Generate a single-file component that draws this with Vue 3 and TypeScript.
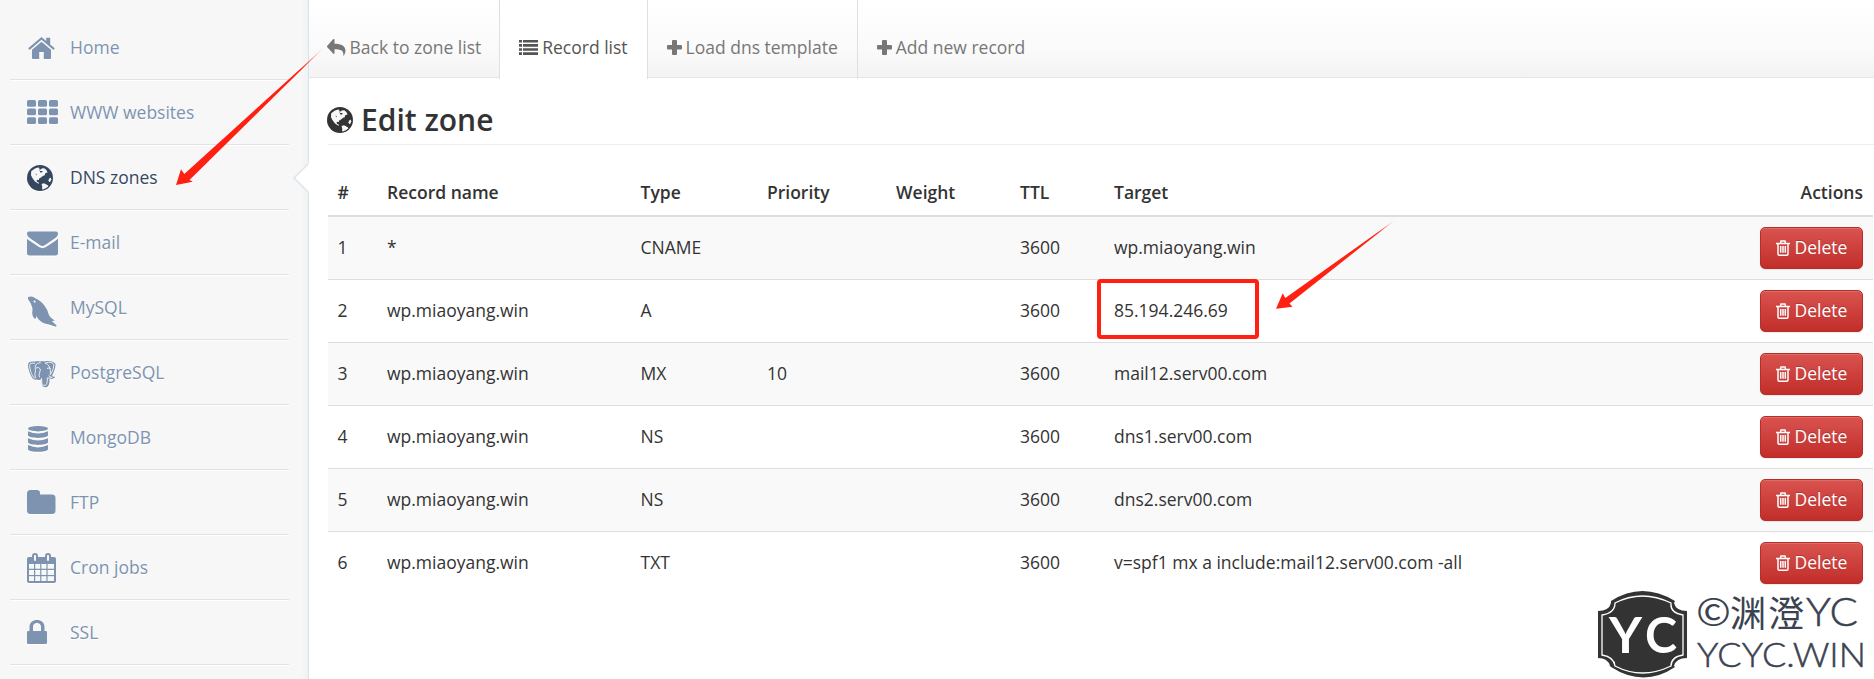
<script setup lang="ts">
interface MenuItem { icon: string; label: string; active?: boolean }
interface DnsRecord { name: string; type: string; priority?: number; target: string }

const menu: MenuItem[] = [
  { icon: 'home', label: 'Home' },
  { icon: 'grid', label: 'WWW websites' },
  { icon: 'globe', label: 'DNS zones', active: true },
  { icon: 'mail', label: 'E-mail' },
  { icon: 'mysql', label: 'MySQL' },
  { icon: 'postgres', label: 'PostgreSQL' },
  { icon: 'database', label: 'MongoDB' },
  { icon: 'folder', label: 'FTP' },
  { icon: 'calendar', label: 'Cron jobs' },
  { icon: 'lock', label: 'SSL' },
]

const records: DnsRecord[] = [
  { name: '*', type: 'CNAME', target: 'wp.miaoyang.win' },
  { name: 'wp.miaoyang.win', type: 'A', target: '85.194.246.69' },
  { name: 'wp.miaoyang.win', type: 'MX', priority: 10, target: 'mail12.serv00.com' },
  { name: 'wp.miaoyang.win', type: 'NS', target: 'dns1.serv00.com' },
  { name: 'wp.miaoyang.win', type: 'NS', target: 'dns2.serv00.com' },
  { name: 'wp.miaoyang.win', type: 'TXT', target: 'v=spf1 mx a include:mail12.serv00.com -all' },
]
</script>

<template>
  <div class="page">
    <svg class="defs" width="0" height="0" aria-hidden="true">
      <defs>
        <symbol id="globe" viewBox="0 0 26 26">
          <circle cx="13" cy="13" r="13" fill="currentColor" />
          <path class="land" d="M4.200 6.200 8 3.400l3-.9 1.600.6-.8 1.200 1.900.1 1.500-1.200 2.600.4 1.900 1.800.8 2-1.700.6-1.100.9.4 1.200-2.300.9-1.800 1.600-1.900.9-.1 1.400-1.500-.1-1 .8.700 1.400 1.500.5.400 1.200-2-.6-2.300-1.800-2.400-3.200L4 10.200z" />
          <path class="land" d="m14.600 19 2.400-.7 3.800 1.900.6 1.300-2.600 1.800-3 1.200-.8-.6.300-2z" />
          <path class="land" d="m22.300 13.400 1.400-.8.500 1.600-.8 2.500-1.300.2-.6-1.600z" />
          <path d="m12.200 4.800 1.300 1.200 2.100.1-.5 1.300-1.700.2zM8.500 8.700l1.200.3-.4 1.400z" fill="currentColor" />
        </symbol>
        <symbol id="plus" viewBox="0 0 15 15"><path d="M5 1a1 1 0 0 1 1-1h3a1 1 0 0 1 1 1v4h4a1 1 0 0 1 1 1v2.500a1 1 0 0 1-1 1h-4V14a1 1 0 0 1-1 1H6a1 1 0 0 1-1-1V9.500H1a1 1 0 0 1-1-1V6a1 1 0 0 1 1-1h4z" /></symbol>
      </defs>
    </svg>

    <aside class="sidebar">
      <div v-for="item in menu" :key="item.label" class="item" :class="{ active: item.active }">
        <svg class="glyph" width="32" height="32" viewBox="0 0 32 32" fill="currentColor">
          <g v-if="item.icon === 'home'">
            <path d="M14.500 10.700 24 18.700V27a1 1 0 0 1-1 1h-6.200v-7h-4.600v7H6a1 1 0 0 1-1-1v-8.300z" />
            <path d="m14.500 6 4.700 4V6.700h4v6.700l4.600 3.900-1.300 1.700-12-10.200L2.600 19l-1.400-1.700z" />
          </g>
          <g v-else-if="item.icon === 'grid'">
            <template v-for="r in 3" :key="r">
              <rect v-for="c in 3" :key="c" :x="c * 11 - 11" :y="r * 8.6 - 4.600" width="9" height="6.700" rx="1.500" />
            </template>
          </g>
          <use v-else-if="item.icon === 'globe'" href="#globe" x="0" y="4" width="26" height="26" />
          <g v-else-if="item.icon === 'mail'">
            <path d="M2 5.500h27q2 0 2 2.300c0 1.700-1.300 3.200-3 4.500l-9.800 6.700q-2.700 2-5.400 0L3 12.300C1.300 11 0 9.500 0 7.800q0-2.300 2-2.300z" />
            <path d="M0 12.700q1 1 2.200 1.800L12 21q3.500 2.300 7 0l9.800-6.500 2.200-1.800V27q0 2.500-2.500 2.500h-26Q0 29.500 0 27z" />
          </g>
          <g v-else-if="item.icon === 'mysql'" transform="translate(0 5)">
            <path d="M1 1.200Q5-.5 9 2.800c5 2 9 6.500 11.300 11.500 1.200 4 2.200 7 5 8.500l2.500 2-3 .2 4.800 4.500-.6 1.200-7-2.200C16 27.500 11.500 25 9.500 20L8.600 23Q5 22 5.200 16q.8-3-.5-6C4 7 2.200 5.500 1 3z" />
            <circle class="land" cx="7.600" cy="5.600" r="1.100" />
          </g>
          <g v-else-if="item.icon === 'postgres'" transform="translate(0 4)">
            <path d="M9 19.500C5.500 21.500 1.200 11 1 5.500.9 1.500 4 1 8 1.600q2.500-1 5-.2 2-.8 4.500 0C20.500.5 26 .8 28.200 3.500c1 3-1.200 8.500-3.200 12.500q.6 1 3.200.8-1.200 2.500-5.800 2.400c.2 3 .1 5.600-1.700 7.300q-2.700 1.800-5-.2c-1.600-2-.8-5.300-1.200-7.300q-2 1.800-4.500.5z" />
            <path class="detail" d="M8.800 17.500C6 20 2.700 10 2.600 5.500 2.600 3 5 2.900 8.100 3.300M8.300 17.500q-1-4 .2-6.600C7.500 6 9 2.500 13.700 2.800M9 8q3-1.500 4.300 1c.3 3-2.400 5.300-.7 8.300M18 3c4 1.200 6 5.500 5.300 11.600M18.300 3c4-1.400 8.400-.4 8.500 2-.1 4.500-2.300 8-3.800 9.800M20 8.500q2-1 3.500 0M14.500 18c.6 3-.5 7.200 2.500 7.400 3 0 3.300-2 3.300-7.500q2.600.8 4.800-.5-3 0-3.300-2" />
          </g>
          <g v-else-if="item.icon === 'database'" transform="translate(0 5)">
            <ellipse cx="11" cy="2.700" rx="10" ry="2.700" />
            <path v-for="n in 3" :key="n" :transform="`translate(0 ${n * 6.900 - 6.900})`" d="M1 5.300q10 4.600 20 0v4.300c-1.500 3.200-18.500 3.200-20 0z" />
          </g>
          <path v-else-if="item.icon === 'folder'" transform="translate(0 1)" d="M3.500 3h6.300Q13 3 13 6.200V7.500h12.200Q28.500 7.500 28.500 11v12.500q0 3.500-3.500 3.500H3.500Q0 27 0 23.500v-17Q0 3 3.500 3z" />
          <g v-else-if="item.icon === 'calendar'" transform="translate(0 1)">
            <path fill-rule="evenodd" d="M2 5h3V4q0-3 3-3t3 3v1h7V4q0-3 3-3t3 3v1h3q2 0 2 2v22q0 2-2 2H2q-2 0-2-2V7q0-2 2-2zM2 12v4.700h5V12zm6.200 0v4.700h5V12zm6.200 0v4.700h5V12zm6.200 0v4.700H27V12zM2 18v5h5v-5zm6.200 0v5h5v-5zm6.200 0v5h5v-5zm6.200 0v5H27v-5zM2 24.200V29h5v-4.800zm6.200 0V29h5v-4.800zm6.200 0V29h5v-4.800zm6.200 0V29H27v-4.800zM7 4v4q0 1 1 1t1-1V4q0-1-1-1T7 4zm13 0v4q0 1 1 1t1-1V4q0-1-1-1t-1 1z" />
          </g>
          <path v-else transform="translate(0 1)" fill-rule="evenodd" d="M2.500 14V10C2.500 5.500 6 3 10 3s7.500 2.500 7.500 7v4h1.200Q20 14 20 15.300v10.400q0 1.300-1.300 1.300H1.300Q0 27 0 25.700V15.300Q0 14 1.300 14zm3.500 0h8v-4c0-2.600-1.700-4-4-4s-4 1.400-4 4z" />
        </svg>
        <span>{{ item.label }}</span>
        <svg v-if="item.active" class="notch" width="16" height="30" viewBox="0 0 16 30">
          <path d="M16 0v30L1 15z" fill="#fff" />
          <path d="M15 1 1 15l14 14" fill="none" stroke="#dde6ec" stroke-width="1.700" />
        </svg>
      </div>
    </aside>

    <main class="content">
      <nav class="tabs">
        <a class="tab">
          <svg width="19" height="17" viewBox="0 0 19 17"><path d="M7.500.5v4.200c7 0 11 2.300 11 7.100q0 2.500-1.600 4.800-.7.300-.6-.5c.5-4.400-2-5.800-8.800-5.900v4.100q-.5 1-1.400.3L.3 8.200Q-.3 7.500.3 6.800L6.100.3q.9-.8 1.400.2z" /></svg>
          <span>Back to zone list</span>
        </a>
        <a class="tab active">
          <svg width="19" height="15" viewBox="0 0 19 15"><path d="M0 0h3v2.600H0zM4 0h15v2.600H4zM0 4.100h3v2.600H0zM4 4.100h15v2.600H4zM0 8.200h3v2.600H0zM4 8.200h15v2.600H4zM0 12.300h3v2.600H0zM4 12.300h15v2.600H4z" /></svg>
          <span>Record list</span>
        </a>
        <a class="tab"><svg width="15" height="15"><use href="#plus" /></svg><span>Load dns template</span></a>
        <a class="tab"><svg width="15" height="15"><use href="#plus" /></svg><span>Add new record</span></a>
      </nav>

      <h1><svg width="26" height="26"><use href="#globe" /></svg><span>Edit zone</span></h1>

      <table>
        <colgroup>
          <col class="c-num"><col class="c-name"><col class="c-type"><col class="c-prio">
          <col class="c-weight"><col class="c-ttl"><col><col class="c-act">
        </colgroup>
        <thead>
          <tr><th>#</th><th>Record name</th><th>Type</th><th>Priority</th><th>Weight</th><th>TTL</th><th>Target</th><th class="right">Actions</th></tr>
        </thead>
        <tbody>
          <tr v-for="(rec, i) in records" :key="i">
            <td>{{ i + 1 }}</td>
            <td>{{ rec.name }}</td>
            <td>{{ rec.type }}</td>
            <td>{{ rec.priority }}</td>
            <td></td>
            <td>3600</td>
            <td>{{ rec.target }}</td>
            <td class="right">
              <button type="button">
                <svg width="14" height="16" viewBox="0 0 14 16" fill="none" stroke="#fff" stroke-width="1.500">
                  <path d="M0 3.500h14M4.500 3.200 5 1h4l.5 2.200M2 3.500V14q0 1.200 1.200 1.200h7.600Q12 15.200 12 14V3.500M4.700 6v6.700M7 6v6.700M9.300 6v6.700" />
                </svg>
                <span>Delete</span>
              </button>
            </td>
          </tr>
        </tbody>
      </table>
    </main>

    <svg class="overlay" width="1874" height="679" viewBox="0 0 1874 679">
      <defs>
        <linearGradient id="fadeA" gradientUnits="userSpaceOnUse" x1="325" y1="47" x2="300" y2="70">
          <stop offset="0" stop-color="#ff2012" stop-opacity=".15" /><stop offset="1" stop-color="#ff2012" />
        </linearGradient>
        <linearGradient id="fadeB" gradientUnits="userSpaceOnUse" x1="1395" y1="220" x2="1378" y2="232">
          <stop offset="0" stop-color="#ff2012" stop-opacity=".3" /><stop offset="1" stop-color="#ff2012" />
        </linearGradient>
      </defs>
      <path fill="url(#fadeA)" d="M176 185 181 169.300 184.300 174 325 46.500 189.500 180 192.700 181.700z" />
      <path fill="url(#fadeB)" d="M1276 308.700 1282.700 293.300 1285.300 298 1395 220 1289.500 303.500 1292.500 306.700z" />
      <rect x="1099" y="281" width="158" height="56" rx="2" fill="none" stroke="#ff2012" stroke-width="4" />

      <path fill="#333" d="M1611 601q31-20 64 0l-1 2q2 8 13 8v47q-11 0-13 8l1 1q-31 21-64 0l-1-1q-2-8-12-8v-47q11 0 13-8z" />
      <path fill="none" stroke="#fff" stroke-width="1.300" d="M1615 603q27-14 56 0-1 10 12 12v40q-12 2-12 11-29 14-56 0-1-9-13-11v-40q13-2 13-12z" />
      <text class="badge" x="1609" y="652.500" textLength="33" lengthAdjust="spacingAndGlyphs">Y</text>
      <text class="badge" x="1645" y="652.500" textLength="32" lengthAdjust="spacingAndGlyphs">C</text>
      <text class="mark cjk" x="1696" y="626" font-size="38" textLength="35" lengthAdjust="spacingAndGlyphs">©</text>
      <text class="mark cjk" x="1730" y="627" font-size="36" textLength="74">渊澄</text>
      <text class="mark" x="1806" y="625.500" font-size="38.500" textLength="52" lengthAdjust="spacingAndGlyphs">YC</text>
      <text class="mark" x="1697" y="666.500" font-size="34" textLength="169" lengthAdjust="spacingAndGlyphs">YCYC.WIN</text>
    </svg>
  </div>
</template>

<style>
body { margin: 0; overflow: hidden; }
</style>

<style scoped>
.page { position: relative; display: flex; width: 1874px; height: 679px; overflow: hidden; background: #fff; color: #333; font: 400 17.500px/25px "Open Sans", sans-serif; }
.defs { position: absolute; }
.land { fill: #f7f7f7; }
.sidebar { box-sizing: border-box; width: 309px; flex: none; padding: 15px 19px 0 10px; border-right: 1px solid #d9e1ea; background: linear-gradient(to left, #f1f2f3, #f7f7f7 7px); }
.item { position: relative; box-sizing: border-box; height: 65px; padding-left: 17px; display: flex; align-items: center; gap: 11px; border-bottom: 1px solid #e2e2e2; box-shadow: 0 1px #fff; color: #7d93b0; text-shadow: 0 1px #fff; }
.item.active { color: #34475e; }
.notch { position: absolute; left: 283px; top: 18px; }
.glyph { overflow: visible; filter: drop-shadow(0 1px 0 #fff); }
.detail { fill: none; stroke: #f7f7f7; stroke-width: .9; }
.content { flex: 1; min-width: 0; }
.tabs { display: flex; height: 78px; background: linear-gradient(#fff, #fafafa 65%, #f3f3f3); box-shadow: inset 0 -1px #e5e5e5; }
.tab { box-sizing: border-box; height: 79px; display: flex; align-items: center; padding: 15px 19px 0; border-right: 1px solid #d9e1ea; color: #777; gap: 4px; white-space: nowrap; }
.tab:first-child { padding: 15px 18px 0; gap: 3.500px; }
.tab:last-child { border-right: 0; }
.tab.active { background: #fff; color: #555; }
.tab svg { fill: currentColor; flex: none; }
h1 { box-sizing: border-box; height: 67px; margin: 0 0 0 19px; padding-top: 18px; display: flex; align-items: center; gap: 8px; border-bottom: 1px solid #eee; font-size: 30px; line-height: 40px; font-weight: 600; }
h1 svg { margin-left: -1px; }
table { width: 1545px; margin: 25px 0 0 19px; table-layout: fixed; border-collapse: separate; border-spacing: 0; }
.c-num { width: 49px; } .c-name { width: 253.500px; } .c-type { width: 126.500px; } .c-prio { width: 129px; }
.c-weight { width: 124px; } .c-ttl { width: 94px; } .c-act { width: 180px; }
th, td { box-sizing: border-box; padding: 0 10px; text-align: left; white-space: nowrap; }
th:first-child, td:first-child { padding-left: 9.500px; }
th { height: 47px; border-bottom: 2px solid #ddd; font-weight: 600; padding-top: 0; }
td { height: 63px; padding-bottom: 2px; border-bottom: 1px solid #ddd; }
td.right { padding-bottom: 0; }
tbody tr:nth-child(odd) td { background: #f9f9f9; }
tbody tr:last-child td { border: 0; height: 62px; background: #fff; }
.right { text-align: right; }
button { box-sizing: border-box; width: 103px; height: 42px; padding: 0 0 1px; display: inline-flex; align-items: center; justify-content: center; gap: 5px; vertical-align: middle; border: 1px solid #b92c28; border-radius: 5px; background: linear-gradient(#d9534f, #c12e2a); box-shadow: inset 0 1px rgba(255,255,255,.15), 0 1px 1px rgba(0,0,0,.08); color: #fff; font: inherit; text-shadow: 0 -1px rgba(0,0,0,.2); }
.overlay { position: absolute; left: 0; top: 0; pointer-events: none; }
.mark { fill: #3b4350; stroke: #3b4350; stroke-width: .5; font-family: Lato, sans-serif; font-weight: 300; }
.mark.cjk { stroke-width: 0; font-family: "Noto Sans CJK SC", sans-serif; font-weight: 400; }
.badge { fill: #fff; font: 700 50px Lato, sans-serif; }
</style>
